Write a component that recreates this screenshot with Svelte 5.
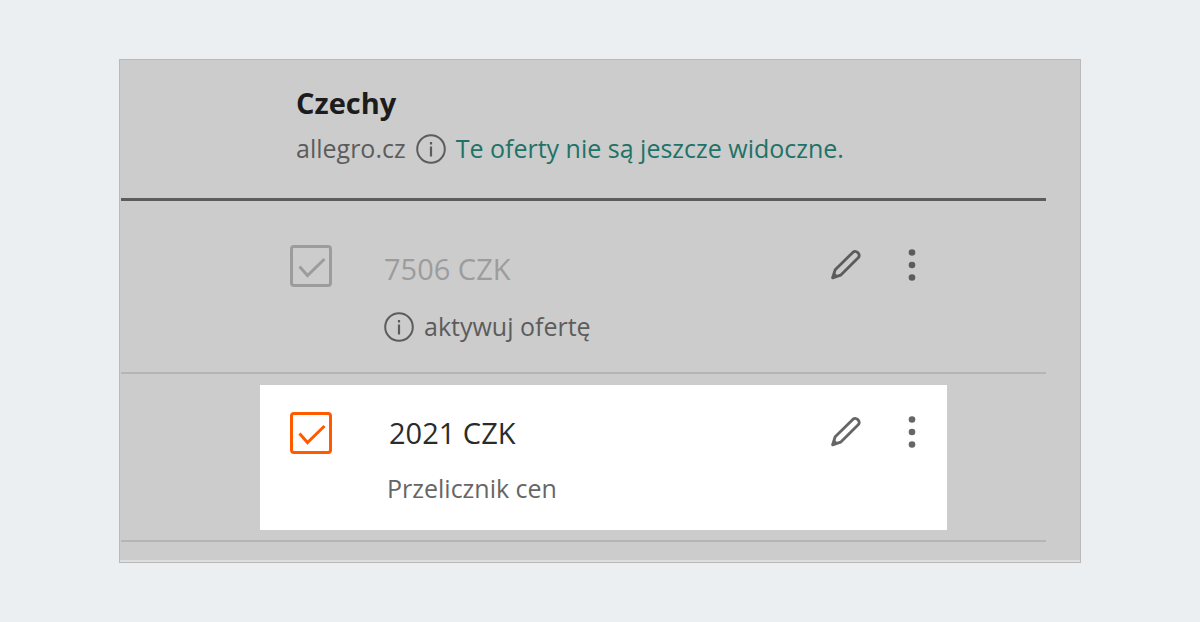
<script>
	let offers = $state([
		{ id: 1, price: '7506 CZK', note: 'aktywuj ofertę', checked: true, inactive: true },
		{ id: 2, price: '2021 CZK', note: 'Przelicznik cen', checked: true, inactive: false }
	]);
</script>

{#snippet info()}
	<svg class="info" viewBox="0 0 30 32" aria-hidden="true">
		<circle cx="15" cy="17" r="13.8" fill="none" stroke="currentColor" stroke-width="2" />
		<path d="M15 14.5V24.5M15 10V12.5" fill="none" stroke="currentColor" stroke-width="2.2" />
	</svg>
{/snippet}

<main>
	<section class="panel">
		<header>
			<h1>Czechy</h1>
			<p>
				<span>allegro.cz</span>
				{@render info()}
				<span class="status">Te oferty nie są jeszcze widoczne.</span>
			</p>
		</header>

		{#each offers as offer (offer.id)}
			<div class="row">
				<div class="offer" class:inactive={offer.inactive} class:active={!offer.inactive}>
					<label class="check">
						<input
							type="checkbox"
							bind:checked={offer.checked}
							disabled={offer.inactive}
							aria-label={offer.price}
						/>
						<svg viewBox="0 0 42 42" aria-hidden="true">
							<path d="M9.5 21.5L17.5 30.5L34.5 14" fill="none" stroke="currentColor" stroke-width="3" />
						</svg>
					</label>
					<div class="details">
						<div class="price">{offer.price}</div>
						<div class="note">
							{#if offer.inactive}{@render info()}{/if}
							<span>{offer.note}</span>
						</div>
					</div>
					<div class="actions">
						<button type="button" aria-label="Edytuj">
							<svg viewBox="0 0 32 32" aria-hidden="true">
								<path
									d="M2.6 28.8L5.2 20.8L22.8 3.4Q25.2 1.2 27.8 3.6Q30.4 6.2 28.2 8.8L10.6 26.2Z"
									fill="none"
									stroke="currentColor"
									stroke-width="2.8"
									stroke-linejoin="round"
								/>
								<path d="M4.4 23.4L8 27L2.6 28.8Z" fill="currentColor" />
							</svg>
						</button>
						<button type="button" aria-label="Więcej">
							<svg viewBox="0 0 32 32" aria-hidden="true">
								<circle cx="16" cy="3.5" r="3.3" fill="currentColor" />
								<circle cx="16" cy="16" r="3.3" fill="currentColor" />
								<circle cx="16" cy="28.5" r="3.3" fill="currentColor" />
							</svg>
						</button>
					</div>
				</div>
			</div>
		{/each}
	</section>
</main>

<style>
	:global(body) {
		margin: 0;
		background: #ebeff2;
	}

	main {
		padding: 59px 119px;
		font-family: 'Open Sans', sans-serif;
		color: #5c5c5c;
	}

	.panel {
		padding: 0 34px 20px 1px;
		background: #ccc;
		border: 1px solid #b9b9b9;
		box-shadow: inset 0 -2px #dedede;
	}

	header {
		padding: 23px 0 30px 175px;
		border-bottom: 3px solid #5c5c5c;
	}

	h1 {
		margin: 0;
		font-size: 29px;
		line-height: 40px;
		font-weight: 700;
		color: #1c1c1c;
	}

	p {
		display: flex;
		align-items: center;
		gap: 10px;
		margin: 5px 0 0;
		font-size: 25px;
		line-height: 40px;
	}

	.status {
		color: #1f7268;
	}

	.info {
		flex: none;
		width: 30px;
		height: 32px;
	}

	.row {
		padding: 11px 99px 10px 139px;
		border-bottom: 2px solid #b5b5b5;
	}

	.offer {
		display: flex;
		align-items: flex-start;
		padding: 27px 19px 22px 30px;
	}

	.inactive {
		padding-top: 33px;
		padding-bottom: 16px;
	}

	.active {
		background: #fff;
		color: #666;
	}

	.check {
		display: grid;
		flex: none;
		width: 42px;
		height: 42px;
		color: #ff5a00;
	}

	.check input,
	.check svg {
		grid-area: 1 / 1;
		box-sizing: border-box;
		width: 42px;
		height: 42px;
		margin: 0;
	}

	.check input {
		appearance: none;
		color: inherit;
		border: 3px solid currentColor;
		border-radius: 4px;
	}

	.check svg {
		pointer-events: none;
		visibility: hidden;
	}

	.check input:checked + svg {
		visibility: visible;
	}

	.inactive .check,
	.inactive .price {
		color: #9c9c9c;
	}

	.details {
		flex: 1;
		padding-left: 52px;
	}

	.inactive .details {
		padding-top: 3px;
	}

	.price {
		font-size: 29px;
		line-height: 42px;
	}

	.active .price {
		padding-left: 5px;
		color: #2b2b2b;
	}

	.note {
		display: flex;
		align-items: center;
		gap: 10px;
		margin-top: 16px;
		font-size: 25px;
		line-height: 40px;
	}

	.active .note {
		margin-top: 14px;
		padding-left: 3px;
	}

	.actions {
		display: flex;
		gap: 34px;
		padding-top: 4px;
	}

	button {
		padding: 0;
		border: 0;
		background: none;
		color: inherit;
		cursor: pointer;
	}

	button svg {
		display: block;
		width: 32px;
		height: 32px;
	}
</style>
